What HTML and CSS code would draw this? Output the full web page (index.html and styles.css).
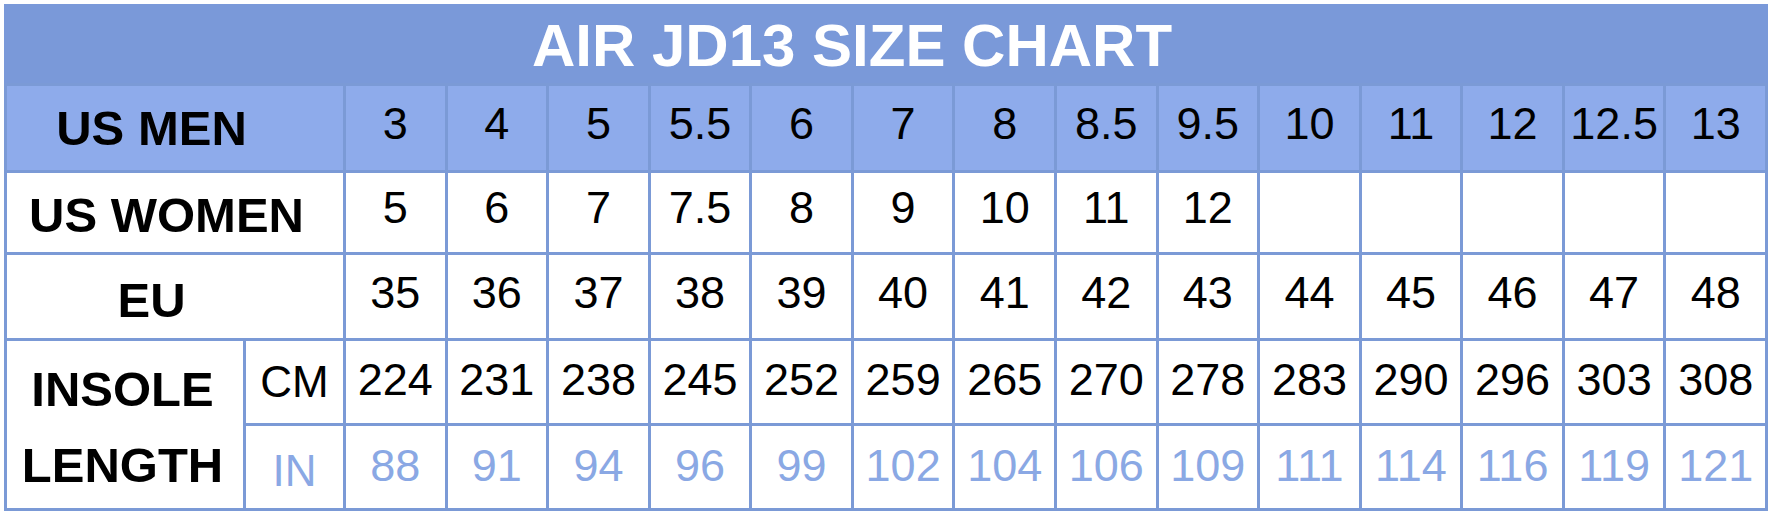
FILE: index.html
```html
<!DOCTYPE html>
<html>
<head>
<meta charset="utf-8">
<link rel="stylesheet" href="styles.css">
</head>
<body>
<div class="chart">
  <div class="title">AIR JD13 SIZE CHART</div>

  <div class="cell head label lbl-men">US MEN</div>
  <div class="cell head num r1">3</div>
  <div class="cell head num r1">4</div>
  <div class="cell head num r1">5</div>
  <div class="cell head num r1">5.5</div>
  <div class="cell head num r1">6</div>
  <div class="cell head num r1">7</div>
  <div class="cell head num r1">8</div>
  <div class="cell head num r1">8.5</div>
  <div class="cell head num r1">9.5</div>
  <div class="cell head num r1">10</div>
  <div class="cell head num r1">11</div>
  <div class="cell head num r1">12</div>
  <div class="cell head num r1">12.5</div>
  <div class="cell head num r1">13</div>

  <div class="cell label lbl-women">US WOMEN</div>
  <div class="cell num r2">5</div>
  <div class="cell num r2">6</div>
  <div class="cell num r2">7</div>
  <div class="cell num r2">7.5</div>
  <div class="cell num r2">8</div>
  <div class="cell num r2">9</div>
  <div class="cell num r2">10</div>
  <div class="cell num r2">11</div>
  <div class="cell num r2">12</div>
  <div class="cell num r2"></div>
  <div class="cell num r2"></div>
  <div class="cell num r2"></div>
  <div class="cell num r2"></div>
  <div class="cell num r2"></div>

  <div class="cell label lbl-eu">EU</div>
  <div class="cell num r3">35</div>
  <div class="cell num r3">36</div>
  <div class="cell num r3">37</div>
  <div class="cell num r3">38</div>
  <div class="cell num r3">39</div>
  <div class="cell num r3">40</div>
  <div class="cell num r3">41</div>
  <div class="cell num r3">42</div>
  <div class="cell num r3">43</div>
  <div class="cell num r3">44</div>
  <div class="cell num r3">45</div>
  <div class="cell num r3">46</div>
  <div class="cell num r3">47</div>
  <div class="cell num r3">48</div>

  <div class="cell label lbl-insole">INSOLE<br>LENGTH</div>
  <div class="cell unit unit-cm">CM</div>
  <div class="cell num r4">224</div>
  <div class="cell num r4">231</div>
  <div class="cell num r4">238</div>
  <div class="cell num r4">245</div>
  <div class="cell num r4">252</div>
  <div class="cell num r4">259</div>
  <div class="cell num r4">265</div>
  <div class="cell num r4">270</div>
  <div class="cell num r4">278</div>
  <div class="cell num r4">283</div>
  <div class="cell num r4">290</div>
  <div class="cell num r4">296</div>
  <div class="cell num r4">303</div>
  <div class="cell num r4">308</div>

  <div class="cell unit unit-in">IN</div>
  <div class="cell num r5 light">88</div>
  <div class="cell num r5 light">91</div>
  <div class="cell num r5 light">94</div>
  <div class="cell num r5 light">96</div>
  <div class="cell num r5 light">99</div>
  <div class="cell num r5 light">102</div>
  <div class="cell num r5 light">104</div>
  <div class="cell num r5 light">106</div>
  <div class="cell num r5 light">109</div>
  <div class="cell num r5 light">111</div>
  <div class="cell num r5 light">114</div>
  <div class="cell num r5 light">116</div>
  <div class="cell num r5 light">119</div>
  <div class="cell num r5 light">121</div>
</div>
</body>
</html>
```

FILE: styles.css
```css
html, body {
  margin: 0;
  padding: 0;
  background: #ffffff;
}

body {
  padding: 4px 0 0 4px;
  font-family: "Liberation Sans", Arial, sans-serif;
}

.chart {
  width: 1764px;
  box-sizing: border-box;
  display: grid;
  grid-template-columns: 236px 97px repeat(14, 1fr);
  grid-template-rows: 76px 84px 79px 83px 82px 82px;
  gap: 3px;
  padding: 3px;
  background: #7b9ad6;
}

.title {
  grid-column: 1 / -1;
  margin: -3px -3px 0 -3px;
  background: #7a99d9;
  color: #ffffff;
  font-weight: bold;
  font-size: 60px;
  display: flex;
  align-items: center;
  justify-content: center;
  padding-right: 68px;
  padding-top: 3px;
}

.cell {
  background: #ffffff;
  display: flex;
  align-items: center;
  justify-content: center;
  box-sizing: border-box;
  color: #000000;
}

.head {
  background: #8eabeb;
}

.label {
  grid-column: 1 / 3;
  font-weight: bold;
  font-size: 49px;
  text-align: center;
}

.lbl-men {
  padding-right: 47px;
}

.lbl-women {
  padding-right: 17px;
  padding-top: 5px;
}

.lbl-eu {
  padding-right: 47px;
  padding-top: 7px;
}

.lbl-insole {
  grid-column: 1 / 2;
  grid-row: span 2;
  line-height: 76px;
  padding-right: 5px;
  padding-top: 4px;
}

.unit {
  font-size: 44px;
}

.unit-cm {
  padding-bottom: 1px;
}

.unit-in {
  color: #8aa8e4;
  padding-top: 8px;
}

.num {
  font-size: 45px;
}

.r1 { padding-bottom: 8px; }
.r2 { padding-bottom: 9px; }
.r3 { padding-bottom: 7px; }
.r4 { padding-bottom: 4px; }
.r5 { padding-bottom: 3px; }

.light {
  color: #8aa8e4;
}
```
